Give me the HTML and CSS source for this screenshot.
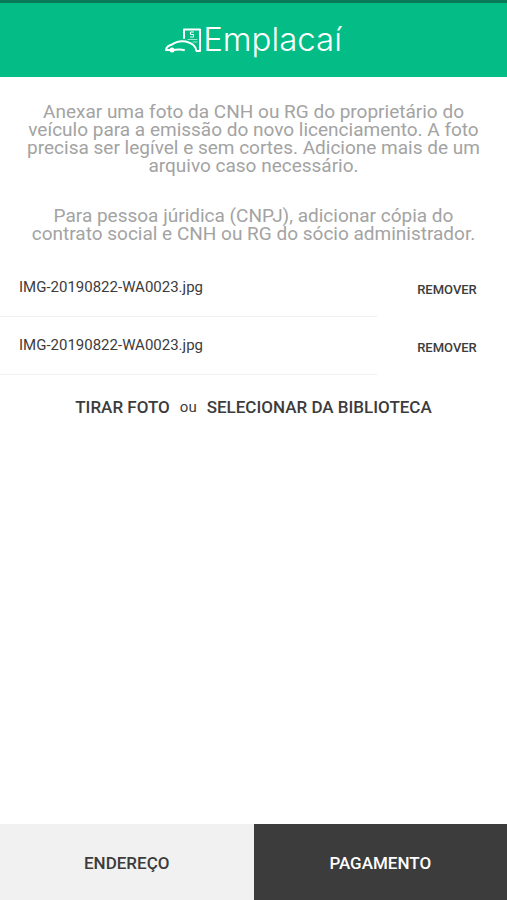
FILE: index.html
```html
<!DOCTYPE html>
<html lang="pt-BR">
<head>
  <meta charset="utf-8">
  <meta name="viewport" content="width=device-width, initial-scale=1">
  <title>Emplacaí</title>
  <link rel="stylesheet" href="styles.css">
</head>
<body>
  <header class="header">
    <div class="brand">
      <svg class="brand-icon" viewBox="0 0 38 26" aria-hidden="true">
        <path d="M19 11V2.500H35V24H31.500C31 19 27 16 21 14.500C15 13.500 11 14.500 7 17.500C3 18.500 1.500 20 1 23H6" />
        <path d="M6 23.500C11 22.500 14 22 19 23" />
        <path class="brand-thin" d="M28.500 5H25.500V7.500H28.500V10H25.500" />
        <path class="brand-lines" d="M23 12.500H32M28 15H32" />
        <circle class="brand-wheel" cx="7" cy="23" r="2.500" />
      </svg>
      <span class="brand-name">Emplacaí</span>
    </div>
  </header>
  <main class="content">
    <div class="intro">
      <p>Anexar uma foto da CNH ou RG do proprietário do veículo para a emissão do novo licenciamento. A foto precisa ser legível e sem cortes. Adicione mais de um arquivo caso necessário.</p>
      <p>Para pessoa júridica (CNPJ), adicionar cópia do contrato social e CNH ou RG do sócio administrador.</p>
    </div>
    <ul class="files">
      <li class="file">
        <span class="file-name">IMG-20190822-WA0023.jpg</span>
        <button class="remove" type="button">REMOVER</button>
      </li>
      <li class="file">
        <span class="file-name">IMG-20190822-WA0023.jpg</span>
        <button class="remove" type="button">REMOVER</button>
      </li>
    </ul>
    <div class="sources">
      <button class="source" type="button">TIRAR FOTO</button>
      <span class="or">ou</span>
      <button class="source" type="button">SELECIONAR DA BIBLIOTECA</button>
    </div>
  </main>
  <nav class="steps">
    <button class="step" type="button">ENDEREÇO</button>
    <button class="step step-next" type="button">PAGAMENTO</button>
  </nav>
</body>
</html>
```
FILE: styles.css
```css
* {
  box-sizing: border-box;
}

body {
  margin: 0;
  min-height: 100vh;
  display: flex;
  flex-direction: column;
  background: #fff;
  color: #3c3c3c;
  font-family: Roboto, sans-serif;
}

button {
  border: 0;
  padding: 0;
  background: none;
  color: inherit;
  font-family: inherit;
  font-weight: 500;
  cursor: pointer;
}

.header {
  display: flex;
  justify-content: center;
  padding: 15px 0 16px;
  border-top: 3px solid #087a57;
  background: #04bd86;
  color: #fff;
}

.brand {
  display: flex;
  align-items: center;
}

.brand-icon {
  width: 38px;
  height: 26px;
  fill: none;
  stroke: currentColor;
  stroke-width: 2;
  stroke-linejoin: round;
  stroke-linecap: round;
}

.brand-thin {
  stroke-width: 1;
}

.brand-lines {
  stroke-width: 1;
  opacity: 0.6;
}

.brand-wheel {
  fill: currentColor;
  stroke: none;
}

.brand-name {
  font-family: Inter, sans-serif;
  font-size: 33px;
  font-weight: 300;
  line-height: 43px;
}

.content {
  flex: 1;
}

.intro {
  padding: 26px 24px 16px;
  color: #a3a3a3;
  font-size: 19px;
  line-height: 18px;
  text-align: center;
}

.intro p {
  margin: 0;
}

.intro p + p {
  margin-top: 32px;
}

.files {
  margin: 0;
  padding: 0;
  list-style: none;
}

.file {
  display: grid;
  grid-template-columns: 377fr 130fr;
  height: 58px;
}

.file-name {
  padding-left: 19px;
  border-bottom: 1px solid #f0f0f0;
  font-size: 15px;
  line-height: 56px;
}

.remove {
  padding: 2px 0 0 10px;
  font-size: 13px;
}

.sources {
  display: flex;
  justify-content: center;
  align-items: center;
  gap: 10px;
  padding-top: 22px;
}

.source {
  font-size: 17px;
  line-height: 20px;
}

.or {
  font-size: 15px;
  line-height: 20px;
}

.steps {
  display: grid;
  grid-template-columns: 1fr 1fr;
}

.step {
  padding-top: 2px;
  background: #f1f1f1;
  font-size: 17px;
  line-height: 74px;
}

.step-next {
  background: #3c3c3c;
  color: #fff;
}
```
